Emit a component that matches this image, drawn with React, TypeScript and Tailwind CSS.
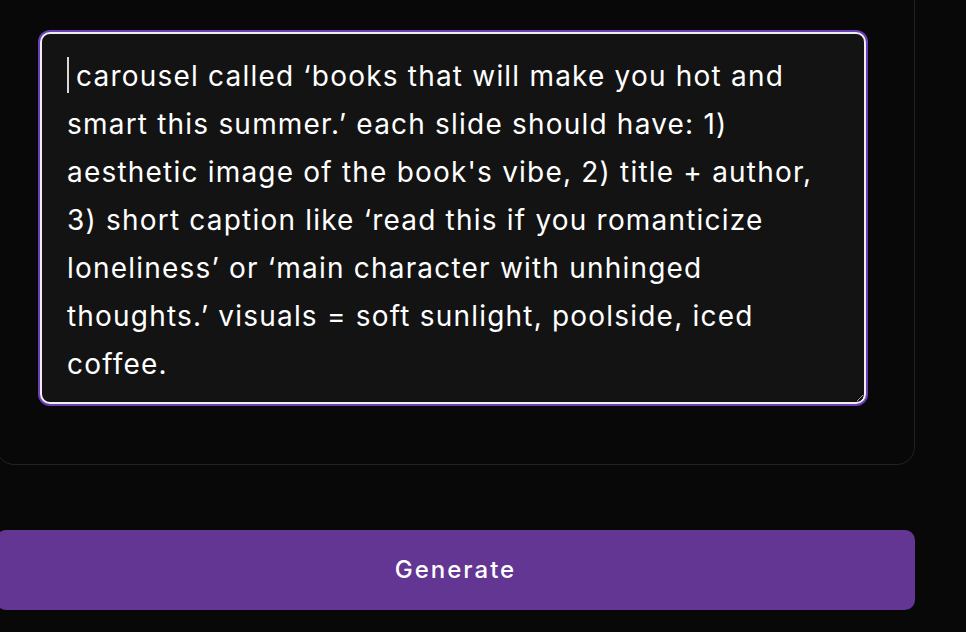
import { useState } from "react";

const PROMPT =
  " carousel called ‘books that will make you hot and smart this summer.’ each slide should have: 1) aesthetic image of the book's vibe, 2) title + author, 3) short caption like ‘read this if you romanticize loneliness’ or ‘main character with unhinged thoughts.’ visuals = soft sunlight, poolside, iced coffee.";

export default function App() {
  const [prompt, setPrompt] = useState(PROMPT);

  return (
    <div className="w-[966px] h-[632px] overflow-hidden bg-[#080808] font-['Inter','Liberation_Sans',sans-serif] [color-scheme:dark]">
      <div className="-ml-[4px] -mt-[60px] w-[919px]">
        {/* Prompt card */}
        <div className="rounded-[18px] border border-[#232323] pt-[91px] pl-[43px] pb-[60px]">
          <div className="relative w-[826px]">
            <textarea
              value={prompt}
              onChange={(e) => setPrompt(e.target.value)}
              className="block w-[826px] h-[372px] rounded-[10px] border-2 border-[#eeeeee] bg-[#131313] pl-[25px] pr-[23px] pt-[18px] text-[28px] leading-[48px] tracking-[1.2px] text-white caret-transparent outline-none ring-2 ring-[#6c3fba]"
            />
            {/* caret */}
            <span className="absolute left-[27px] top-[25px] h-[36px] w-[2px] bg-[#d9d9d9]" />
          </div>
        </div>

        {/* Generate */}
        <button
          type="button"
          className="mt-[65px] flex h-[80px] w-full items-center justify-center rounded-[10px] bg-[#633694] text-[24px] font-medium tracking-[2px] text-white"
        >
          Generate
        </button>
      </div>
    </div>
  );
}
